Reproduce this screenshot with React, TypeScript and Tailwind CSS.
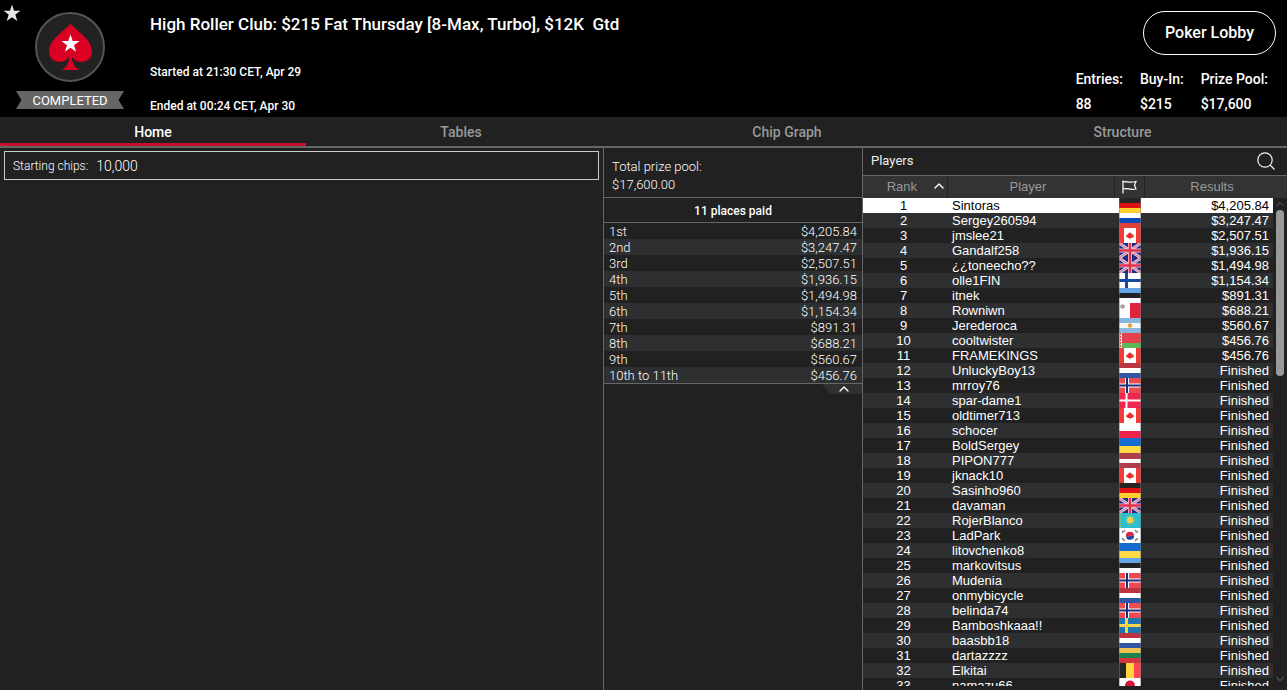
import { useState, type ReactNode } from "react";
import { ChevronDown, ChevronUp } from "lucide-react";

const tabs = ["Home", "Tables", "Chip Graph", "Structure"];

const stats = [
  { label: "Entries:", value: "88" },
  { label: "Buy-In:", value: "$215" },
  { label: "Prize Pool:", value: "$17,600" },
];

const payouts = [
  ["1st", "$4,205.84"],
  ["2nd", "$3,247.47"],
  ["3rd", "$2,507.51"],
  ["4th", "$1,936.15"],
  ["5th", "$1,494.98"],
  ["6th", "$1,154.34"],
  ["7th", "$891.31"],
  ["8th", "$688.21"],
  ["9th", "$560.67"],
  ["10th to 11th", "$456.76"],
];

const players = [
  { name: "Sintoras", country: "de", result: "$4,205.84" },
  { name: "Sergey260594", country: "ru", result: "$3,247.47" },
  { name: "jmslee21", country: "ca", result: "$2,507.51" },
  { name: "Gandalf258", country: "gb", result: "$1,936.15" },
  { name: "¿¿toneecho??", country: "gb", result: "$1,494.98" },
  { name: "olle1FIN", country: "fi", result: "$1,154.34" },
  { name: "itnek", country: "ee", result: "$891.31" },
  { name: "Rowniwn", country: "mt", result: "$688.21" },
  { name: "Jerederoca", country: "ar", result: "$560.67" },
  { name: "cooltwister", country: "by", result: "$456.76" },
  { name: "FRAMEKINGS", country: "ca", result: "$456.76" },
  { name: "UnluckyBoy13", country: "nl" },
  { name: "mrroy76", country: "no" },
  { name: "spar-dame1", country: "dk" },
  { name: "oldtimer713", country: "ca" },
  { name: "schocer", country: "pl" },
  { name: "BoldSergey", country: "ua" },
  { name: "PIPON777", country: "lv" },
  { name: "jknack10", country: "ca" },
  { name: "Sasinho960", country: "de" },
  { name: "davaman", country: "gb" },
  { name: "RojerBlanco", country: "kz" },
  { name: "LadPark", country: "kr" },
  { name: "litovchenko8", country: "ua" },
  { name: "markovitsus", country: "ee" },
  { name: "Mudenia", country: "no" },
  { name: "onmybicycle", country: "nl" },
  { name: "belinda74", country: "no" },
  { name: "Bamboshkaaa!!", country: "se" },
  { name: "baasbb18", country: "nl" },
  { name: "dartazzzz", country: "lt" },
  { name: "Elkitai", country: "be" },
  { name: "namazu66", country: "jp" },
];

// Horizontal bands, 5px each
const triband = (a: string, b: string, c: string) => (
  <>
    <rect width="22" height="5" fill={a} />
    <rect y="5" width="22" height="5" fill={b} />
    <rect y="10" width="22" height="5" fill={c} />
  </>
);

const nordic = (field: string, outer: string, inner: string) => (
  <>
    <rect width="22" height="15" fill={field} />
    <path d="M8 0V15M0 7.5H22" stroke={outer} strokeWidth="4" />
    <path d="M8 0V15M0 7.5H22" stroke={inner} strokeWidth="2" />
  </>
);

const flags: Record<string, ReactNode> = {
  de: triband("#2a2522", "#dd1111", "#ffd02e"),
  ru: triband("#ffffff", "#0b4bb8", "#e0403a"),
  nl: triband("#bc3440", "#ffffff", "#2f57a4"),
  ee: triband("#64a5e8", "#222222", "#ffffff"),
  lt: triband("#f2c353", "#1d8350", "#d0373f"),
  no: nordic("#ef4a50", "#ffffff", "#1b2f7d"),
  fi: (
    <>
      <rect width="22" height="15" fill="#fff" />
      <path d="M7.5 0V15M0 7.5H22" stroke="#134a9c" strokeWidth="3" />
    </>
  ),
  dk: (
    <>
      <rect width="22" height="15" fill="#ee2750" />
      <path d="M7.5 0V15M0 7.5H22" stroke="#fff" strokeWidth="2" />
    </>
  ),
  se: (
    <>
      <rect width="22" height="15" fill="#1c76b4" />
      <path d="M7.5 0V15M0 7.5H22" stroke="#f8d44c" strokeWidth="3" />
    </>
  ),
  ca: (
    <>
      <rect width="22" height="15" fill="#f23a36" />
      <rect x="5" width="12" height="15" fill="#fff" />
      <path d="M11 4l1 1.500 1-.2v1.500l1.800-.3-.3 1.200.7.500-2.200 1.800H11.400V11.500h-.8V10H9L6.800 8.200l.7-.5-.3-1.200 1.800.3V5.300l1 .2z" fill="#e92f2b" />
    </>
  ),
  gb: (
    <>
      <rect width="22" height="15" fill="#1f2b83" />
      <path d="M0 0L22 15M22 0L0 15" stroke="#e6cfe0" strokeWidth="3" />
      <path d="M0 0L22 15M22 0L0 15" stroke="#d8607c" />
      <path d="M11 0V15M0 7.5H22" stroke="#f6cdd6" strokeWidth="4" />
      <path d="M11 0V15M0 7.5H22" stroke="#e0304a" strokeWidth="2.500" />
    </>
  ),
  mt: (
    <>
      <rect width="22" height="15" fill="#fff" />
      <rect x="11" width="11" height="15" fill="#e0243c" />
      <circle cx="3.500" cy="3.500" r="2" fill="#aaa" stroke="#888" strokeDasharray="1 1" />
    </>
  ),
  ar: (
    <>
      {triband("#86b7de", "#f4f6f8", "#86b7de")}
      <circle cx="11" cy="7.500" r="2.200" fill="#eda03c" />
    </>
  ),
  by: (
    <>
      <rect width="22" height="10" fill="#e2434c" />
      <rect y="10" width="22" height="5" fill="#5cb958" />
      <rect width="3" height="15" fill="#f5dada" />
      <path d="M1.500 0V15" stroke="#d9505a" strokeDasharray="2 1" />
    </>
  ),
  pl: (
    <>
      <rect width="22" height="8" fill="#fff" />
      <rect y="8" width="22" height="7" fill="#ee2348" />
    </>
  ),
  ua: (
    <>
      <rect width="22" height="8" fill="#156bd0" />
      <rect y="8" width="22" height="7" fill="#ffda44" />
    </>
  ),
  lv: (
    <>
      <rect width="22" height="15" fill="#ae3f4a" />
      <rect y="6" width="22" height="4" fill="#fff" />
    </>
  ),
  kz: (
    <>
      <rect width="22" height="15" fill="#29bfcf" />
      <circle cx="11" cy="7" r="3.200" fill="#f8d44c" />
      <circle cx="11" cy="7" r="4.500" fill="none" stroke="#d8cf62" strokeDasharray="1 1" />
      <path d="M1.500 0V15" stroke="#9cc66a" strokeDasharray="1 1" />
    </>
  ),
  kr: (
    <>
      <rect width="22" height="15" fill="#fff" />
      <path d="M7 8.500a4 4 0 0 1 8-1.500c-2 2-3 0-4 .5s-2 2.500-4 1z" fill="#d8243e" />
      <path d="M7 8.500a4 4 0 0 0 8-1.500c-2 2-3 0-4 .5s-2 2.500-4 1z" fill="#1b4796" />
      <path d="M3 4.500l3-2M3 10.500l3 2M16 2.500l3 2M16 12.500l3-2" stroke="#666" strokeWidth="2" strokeDasharray="1 .5" />
    </>
  ),
  be: (
    <>
      <rect width="7" height="15" fill="#262626" />
      <rect x="7" width="8" height="15" fill="#ffd63e" />
      <rect x="15" width="7" height="15" fill="#ff4653" />
    </>
  ),
  jp: (
    <>
      <rect width="22" height="15" fill="#fff" />
      <circle cx="11" cy="7.500" r="5" fill="#d3153b" />
    </>
  ),
};

function Flag({ country }: { country: string }) {
  return (
    <svg width="22" height="15" viewBox="0 0 22 15" className="block mx-auto" role="img" aria-label={country}>
      {flags[country]}
      <path d="M.5 0V15M21.500 0V15" stroke="#777" strokeOpacity=".5" />
    </svg>
  );
}

function ClubLogo() {
  return (
    <svg width="70" height="70" viewBox="0 0 70 70" aria-hidden="true">
      <circle cx="35" cy="35" r="34" fill="#222" stroke="#555" strokeWidth="2" />
      <path
        d="M35.500 11C38 17 57 26 57 39.500C57 46 52 50 46.500 50C42.500 50 39 48 37 45C37 51 39.500 55.500 44.500 58H26.500C31.500 55.500 34 51 34 45C32 48 28.500 50 24.500 50C19 50 14 46 14 39.500C14 26 33 17 35.500 11Z"
        fill="#d90022"
      />
      <path d="M35.500 22.500l2.200 6.600h6.900l-5.600 4.100 2.100 6.600-5.600-4.100-5.600 4.100 2.100-6.600-5.600-4.100h6.900z" fill="#fff" />
    </svg>
  );
}

function Header() {
  return (
    <header className="relative flex h-[117px] shrink-0 bg-black font-medium">
      <button aria-label="Add to favourites" className="absolute left-[3px] top-1">
        <svg width="18" height="18" viewBox="0 0 18 18" aria-hidden="true">
          <path d="M9 .5l2 6.200h6.500L12.300 10.500l2 6.500L9 13.200 3.700 17l2-6.500L.5 6.700H7z" fill="#e6e6e6" />
        </svg>
      </button>
      <div className="ml-4 flex w-[108px] flex-col items-center pt-3">
        <ClubLogo />
        <div className="mt-[9px] w-full bg-[#666] pt-px text-center text-[13px] leading-[17px] font-normal [clip-path:polygon(0_0,100%_0,95%_50%,100%_100%,0_100%,5%_50%)]">
          COMPLETED
        </div>
      </div>
      <div className="ml-[26px] flex-1 pt-[14px]">
        <h1 className="text-[17px] leading-5 whitespace-pre">{"High Roller Club: $215 Fat Thursday [8-Max, Turbo], $12K  Gtd"}</h1>
        <p className="mt-[30px] text-xs leading-4">Started at 21:30 CET, Apr 29</p>
        <p className="mt-[18px] text-xs leading-4">Ended at 00:24 CET, Apr 30</p>
      </div>
      <div className="flex flex-col items-end pt-[11px]">
        <button className="mr-[11px] h-11 rounded-full border border-white px-[21px] text-base">Poker Lobby</button>
        <dl className="mt-[14px] mr-[19px] flex gap-[17px] text-sm leading-5">
          {stats.map((stat) => (
            <div key={stat.label}>
              <dt>{stat.label}</dt>
              <dd className="mt-[5px]">{stat.value}</dd>
            </div>
          ))}
        </dl>
      </div>
    </header>
  );
}

function PrizePanel() {
  const [open, setOpen] = useState(true);

  return (
    <section className="border-x border-[#666]">
      <div className="h-[50px] border-b border-[#666] px-2 pt-[10px] text-[13px] leading-[18px] font-light">
        <p>Total prize pool:</p>
        <p>$17,600.00</p>
      </div>
      <h2 className="h-[25px] border-b border-[#666] text-center text-xs leading-[26px] font-medium">11 places paid</h2>
      {open && (
        <table className="w-full text-[13px] leading-[15px] font-light">
          <tbody>
            {payouts.map(([place, prize]) => (
              <tr key={place} className="even:bg-[#2d2f31]">
                <td className="h-4 p-0 pt-px pl-[5px]">{place}</td>
                <td className="h-4 p-0 pt-px pr-[5px] text-right">{prize}</td>
              </tr>
            ))}
          </tbody>
        </table>
      )}
      <div className="flex justify-end border-t border-[#666]">
        <button
          aria-label="Toggle payouts"
          onClick={() => setOpen(!open)}
          className="flex h-[10px] w-10 items-center justify-center bg-[#303030] pl-1 [clip-path:polygon(0_0,100%_0,100%_100%,20%_100%)]"
        >
          <ChevronUp size={16} strokeWidth={2} />
        </button>
      </div>
    </section>
  );
}

function PlayersPanel() {
  return (
    <section className="flex min-h-0 flex-col pb-1">
      <div className="flex h-7 shrink-0 items-center justify-between border-b border-[#666] pr-3 pb-px pl-2">
        <h2 className="text-[13px] leading-[18px] font-normal text-[#eee]">Players</h2>
        <button aria-label="Search players">
          <svg width="18" height="18" viewBox="0 0 18 18" fill="none" stroke="#f2f2f2" strokeWidth="1.200" className="block" aria-hidden="true">
            <circle cx="8" cy="8" r="7.200" />
            <path d="M13 13l4.500 4.500" />
          </svg>
        </button>
      </div>
      <div className="relative min-h-0 flex-1 overflow-hidden">
        <table className="w-full table-fixed border-separate border-spacing-0 font-['Liberation_Sans',sans-serif] text-[13px] leading-[15px]">
          <colgroup>
            <col className="w-[85px]" />
            <col />
            <col className="w-[30px]" />
            <col className="w-[128px]" />
            <col className="w-[14px]" />
          </colgroup>
          <thead className="bg-[#333] text-[#999]">
            <tr>
              <th className="h-[22px] border-r border-[#222] p-0 pb-[2px] font-normal">
                <button className="flex w-full items-center justify-end gap-[14px]">
                  Rank
                  <ChevronUp size={16} className="-my-1 text-white" />
                </button>
              </th>
              <th className="border-r border-[#222] p-0 pr-[6px] pb-[2px] font-normal">Player</th>
              <th className="border-r border-[#222] p-0" aria-label="Country">
                <svg width="15" height="14" viewBox="0 0 15 14" fill="none" stroke="#fff" strokeWidth="1.200" className="mx-auto" aria-hidden="true">
                  <path d="M1 .5V13.500M1 2C4 .5 6 3.500 14 1.500L12.500 5 14 9C8 10.500 5 7.500 1 9" />
                </svg>
              </th>
              <th colSpan={2} className="p-0 pr-[8px] pb-[2px] font-normal">Results</th>
            </tr>
          </thead>
          <tbody>
            {players.map((player, i) => {
              const bg = i === 0 ? "bg-white text-black" : i % 2 ? "bg-[#2d2f31]" : "";
              return (
                <tr key={player.name}>
                  <td className={`h-[15px] p-0 pr-1 text-center ${bg}`}>{i + 1}</td>
                  <td className={`h-[15px] p-0 pl-1 ${bg}`}>{player.name}</td>
                  <td className={`h-[15px] p-0 ${bg}`}>
                    <Flag country={player.country} />
                  </td>
                  <td className={`h-[15px] p-0 pr-1 text-right ${bg}`}>{player.result ?? "Finished"}</td>
                  <td className="p-0" />
                </tr>
              );
            })}
          </tbody>
        </table>
        {/* Scrollbar */}
        <div className="absolute top-[22px] right-0 bottom-0 flex w-[14px] flex-col items-center text-[#777]">
          <ChevronUp size={14} strokeWidth={1.5} className="h-3 shrink-0" />
          <div className="w-2 flex-1">
            <div className="h-[36%] rounded-full bg-[#999]" />
          </div>
          <ChevronDown size={14} strokeWidth={1.5} className="shrink-0" />
        </div>
      </div>
    </section>
  );
}

export default function App() {
  const [activeTab, setActiveTab] = useState("Home");

  return (
    <div className="flex h-screen flex-col overflow-hidden bg-[#212121] font-[Roboto,sans-serif] text-white">
      <Header />
      <nav className="grid h-[31px] shrink-0 grid-cols-[306fr_310fr_342fr_329fr] border-b-2 border-[#666] text-sm font-medium">
        {tabs.map((tab) => (
          <button
            key={tab}
            onClick={() => setActiveTab(tab)}
            className={`border-b-3 pt-1 ${activeTab === tab ? "border-[#c8102e] text-white" : "border-transparent text-[#999]"}`}
          >
            {tab}
          </button>
        ))}
      </nav>
      <main className="grid min-h-0 flex-1 grid-cols-[minmax(0,1fr)_260px_424px] grid-rows-[minmax(0,1fr)]">
        <section className="px-1 pt-[3px]">
          <div className="flex h-[29px] items-center gap-2 border border-[#ccc] px-2 pt-px text-xs font-light">
            <span>Starting chips:</span>
            <span className="text-sm">10,000</span>
          </div>
        </section>
        <PrizePanel />
        <PlayersPanel />
      </main>
    </div>
  );
}
